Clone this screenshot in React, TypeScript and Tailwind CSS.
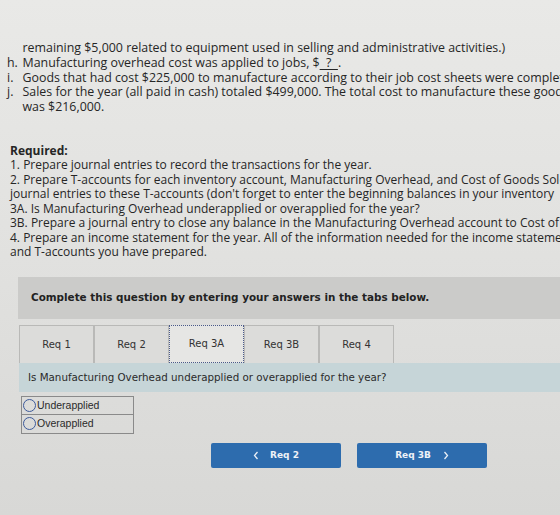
import React from "react";

const body = "font-['Open_Sans','Liberation_Sans',sans-serif]";

function Item({ label, children }: { label: string; children: React.ReactNode }) {
  return (
    <div className="flex whitespace-nowrap">
      <span className="w-[15.5px] shrink-0">{label}</span>
      <span>{children}</span>
    </div>
  );
}

function Tab({ label, active }: { label: string; active?: boolean }) {
  return (
    <div
      className={
        "w-[75px] h-[38px] flex items-center justify-center text-[10px] text-[#333] " +
        (active
          ? "bg-[#e6e6e4] border-[1.5px] border-dotted border-[#4a5a8a]"
          : "bg-[#dcdcda] border border-[#b9b9b7] border-b-0")
      }
    >
      {label}
    </div>
  );
}

function Radio({ label, last }: { label: string; last?: boolean }) {
  return (
    <div className={"flex items-center h-[18px] " + (last ? "" : "border-b border-[#8a8a8a]")}>
      <span className="w-[13px] h-[13px] rounded-full border-[1.5px] border-[#3d5a9a] ml-[1px] shrink-0" />
      <span className="text-[10.5px] text-[#2a2a2a] font-['Liberation_Sans',sans-serif] ml-[1px]">{label}</span>
    </div>
  );
}

function Chevron({ dir }: { dir: "left" | "right" }) {
  return (
    <svg width="6" height="9" viewBox="0 0 6 9" fill="none" stroke="#e8eef6" strokeWidth="1.3">
      {dir === "left" ? <path d="M4.5 1 L1.5 4.5 L4.5 8" /> : <path d="M1.5 1 L4.5 4.5 L1.5 8" />}
    </svg>
  );
}

export default function App() {
  return (
    <div className="w-[560px] h-[515px] overflow-hidden bg-gradient-to-b from-[#e9e9e7] via-[#e1e1df] to-[#d8d8d6] text-[#262626]">
      <div className={`pt-[41px] pl-[7px] text-[12.4px] leading-[14.8px] ${body}`}>
        <Item label="">remaining $5,000 related to equipment used in selling and administrative activities.)</Item>
        <Item label="h.">
          Manufacturing overhead cost was applied to jobs, $
          <span className="underline underline-offset-2">&nbsp;&nbsp;?&nbsp;&nbsp;</span>.
        </Item>
        <Item label="i.">Goods that had cost $225,000 to manufacture according to their job cost sheets were completed.</Item>
        <Item label="j.">Sales for the year (all paid in cash) totaled $499,000. The total cost to manufacture these goods</Item>
        <Item label="">was $216,000.</Item>
      </div>

      <div className={`mt-[29px] pl-[10px] text-[12px] leading-[14.5px] whitespace-nowrap ${body}`}>
        <div className="font-bold">Required:</div>
        <div>1. Prepare journal entries to record the transactions for the year.</div>
        <div>2. Prepare T-accounts for each inventory account, Manufacturing Overhead, and Cost of Goods Sold.</div>
        <div>journal entries to these T-accounts (don't forget to enter the beginning balances in your inventory</div>
        <div>3A. Is Manufacturing Overhead underapplied or overapplied for the year?</div>
        <div>3B. Prepare a journal entry to close any balance in the Manufacturing Overhead account to Cost of</div>
        <div>4. Prepare an income statement for the year. All of the information needed for the income statement</div>
        <div>and T-accounts you have prepared.</div>
      </div>

      <div className="ml-[18px] mt-[17px] h-[42px] bg-[#cbcbc9] flex items-center pl-[13px]">
        <span className="font-['DejaVu_Sans',sans-serif] font-bold text-[10.4px] text-[#222]">
          Complete this question by entering your answers in the tabs below.
        </span>
      </div>

      <div className="ml-[19px] mt-[6px] flex font-['DejaVu_Sans',sans-serif]">
        <Tab label="Req 1" />
        <Tab label="Req 2" />
        <Tab label="Req 3A" active />
        <Tab label="Req 3B" />
        <Tab label="Req 4" />
      </div>

      <div className="ml-[19px] h-[29px] bg-[#c6d5d8] flex items-center pl-[9px]">
        <span className="font-['DejaVu_Sans',sans-serif] text-[10.3px] text-[#2a2a2a]">
          Is Manufacturing Overhead underapplied or overapplied for the year?
        </span>
      </div>

      <div className="ml-[21px] mt-[4px] w-[113px] border border-[#8a8a8a]">
        <Radio label="Underapplied" />
        <Radio label="Overapplied" last />
      </div>

      <div className="mt-[9px] ml-[211px] flex gap-[16px] font-['DejaVu_Sans',sans-serif]">
        <div className="w-[130px] h-[25px] bg-[#2d6cae] rounded-[2px] flex items-center justify-center text-[#eef2f7] text-[9px] font-bold gap-[11px]">
          <Chevron dir="left" />
          <span>Req 2</span>
        </div>
        <div className="w-[130px] h-[25px] bg-[#2d6cae] rounded-[2px] flex items-center justify-center text-[#eef2f7] text-[9px] font-bold gap-[12px]">
          <span>Req 3B</span>
          <Chevron dir="right" />
        </div>
      </div>
    </div>
  );
}
